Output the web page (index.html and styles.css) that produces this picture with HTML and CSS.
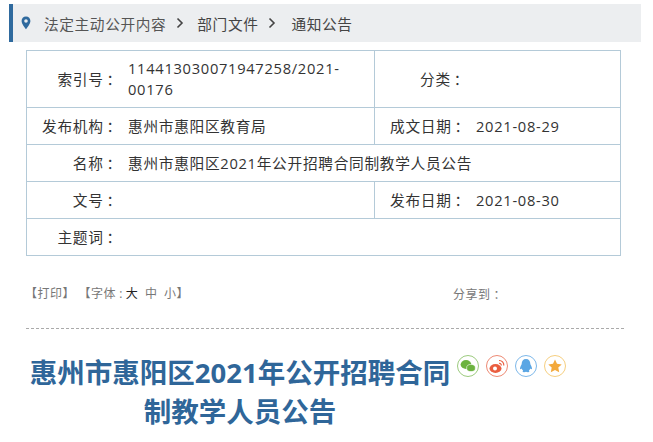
FILE: index.html
```html
<!DOCTYPE html>
<html lang="zh-CN">
<head>
  <meta charset="UTF-8">
  <meta name="viewport" content="width=device-width, initial-scale=1.0">
  <title>通知公告</title>
  <link rel="stylesheet" href="styles.css">
</head>
<body>
  <div class="crumbs">
    <svg class="pin" width="10" height="14" viewBox="0 0 10 14">
      <path fill="#2f6a9e" fill-rule="evenodd" d="M5 0.5C2.3 0.5 0.6 2.5 0.6 4.9 0.6 7.8 3.5 11 5 13.2 6.500 11 9.400 7.800 9.400 4.900 9.400 2.500 7.700 0.500 5 0.500ZM5 3.200A1.800 1.800 0 1 1 5 6.800 1.800 1.800 0 1 1 5 3.200Z"/>
    </svg>
    <a class="crumb first">法定主动公开内容</a>
    <svg class="arrow" width="8" height="12" viewBox="0 0 8 12"><path d="M1.500 1.500L6 6 1.500 10.500" fill="none" stroke="#444" stroke-width="1.600"/></svg>
    <a class="crumb">部门文件</a>
    <svg class="arrow" width="8" height="12" viewBox="0 0 8 12"><path d="M1.500 1.500L6 6 1.500 10.500" fill="none" stroke="#444" stroke-width="1.600"/></svg>
    <a class="crumb">通知公告</a>
  </div>

  <table class="info">
    <tr class="tall">
      <td class="label">索引号<i class="colon">：</i></td>
      <td class="value">114413030071947258/2021-00176</td>
      <td class="label2 center">分类<i class="colon">：</i></td>
      <td class="value2"></td>
    </tr>
    <tr>
      <td class="label">发布机构<i class="colon">：</i></td>
      <td class="value">惠州市惠阳区教育局</td>
      <td class="label2">成文日期<i class="colon">：</i></td>
      <td class="value2">2021-08-29</td>
    </tr>
    <tr>
      <td class="label">名称<i class="colon">：</i></td>
      <td class="value" colspan="3">惠州市惠阳区2021年公开招聘合同制教学人员公告</td>
    </tr>
    <tr>
      <td class="label">文号<i class="colon">：</i></td>
      <td class="value"></td>
      <td class="label2">发布日期<i class="colon">：</i></td>
      <td class="value2">2021-08-30</td>
    </tr>
    <tr>
      <td class="label">主题词<i class="colon">：</i></td>
      <td class="value" colspan="3"></td>
    </tr>
  </table>

  <div class="tools">
    <span class="tool-links">【打印】 【字体<i class="colon tight">:</i><span class="sizes"><b>大</b> 中 小</span>】</span>
    <span class="share">分享到<i class="colon">：</i></span>
  </div>

  <div class="head">
    <h1>惠州市惠阳区2021年公开招聘合同制教学人员公告</h1>
    <div class="icons">
      <svg width="24" height="24" viewBox="0 0 24 24">
        <circle cx="12" cy="12" r="10.500" fill="#fff" stroke="#9ccb7e"/>
        <ellipse cx="10" cy="10.500" rx="5.400" ry="4.400" fill="#6cb33f"/>
        <ellipse cx="15" cy="14" rx="4.400" ry="3.600" fill="#6cb33f" stroke="#fff" stroke-width=".6"/>
      </svg>
      <svg width="24" height="24" viewBox="0 0 24 24">
        <circle cx="12" cy="12" r="10.500" fill="#fff" stroke="#ee8a74"/>
        <ellipse cx="10.500" cy="14.500" rx="6" ry="4.400" fill="#ea5d3f"/>
        <circle cx="10" cy="14.500" r="2" fill="#fff"/>
        <path d="M14 6.500a4.500 4.500 0 0 1 4.800 5M14 9.300a2 2 0 0 1 2.300 2.200" fill="none" stroke="#ea5d3f" stroke-width="1.200"/>
      </svg>
      <svg width="24" height="24" viewBox="0 0 24 24">
        <circle cx="12" cy="12" r="10.500" fill="#fff" stroke="#7db8ea"/>
        <path d="M12 5c-2.900 0-4.300 2.100-4.300 4.800 0 1-1.700 3-1.700 4.700 0 1.100.9.900 1.700 0 .3 1 1 1.700 1.500 2-.8.300-1 1.700.8 1.700 1 0 1.700-.3 2-.5.300.2 1 .5 2 .5 1.800 0 1.600-1.400.8-1.700.5-.3 1.200-1 1.500-2 .8.900 1.700 1.100 1.700 0 0-1.700-1.700-3.700-1.700-4.700C16.300 7.100 14.900 5 12 5Z" fill="#5aa6e4"/>
      </svg>
      <svg width="24" height="24" viewBox="0 0 24 24">
        <circle cx="12" cy="12" r="10.500" fill="#fff" stroke="#f6cf80"/>
        <path d="M12 5.500l2 4.300 4.700.6-3.400 3.200.9 4.600-4.200-2.300-4.200 2.300.9-4.600-3.400-3.200 4.700-.6Z" fill="#f3a93c"/>
      </svg>
    </div>
  </div>
</body>
</html>
```

FILE: styles.css
```css
body {
  margin: 0;
  padding: 4px 12px 0 9px;
  font-family: "Open Sans", "Noto Sans CJK SC", sans-serif;
  background-color: #fff;
  color: #333;
  overflow: hidden;
}

.colon {
  padding-left: 3px;
  font-family: "Noto Sans CJK TC", sans-serif;
  font-style: normal;
}

.colon.tight {
  padding: 0 3px;
  font-family: inherit;
}

.crumbs {
  display: flex;
  align-items: center;
  height: 38px;
  background-color: #eceef0;
  border-left: 4px solid #2f6a9e;
  padding-left: 8px;
  font-size: 14.7px;
  letter-spacing: 0.6px;
  color: #444;
}

.pin {
  margin-right: 13px;
}

.crumb.first {
  color: #555;
}

.arrow {
  margin: 0 13px 0 10px;
}

.arrow + .crumb + .arrow {
  margin-right: 15px;
}

.info {
  width: 595px;
  margin: 8px 0 0 17px;
  border-collapse: collapse;
  table-layout: fixed;
  font-size: 14.7px;
  letter-spacing: 0.7px;
  line-height: 21px;
}

.info td {
  border: 1px solid #b4cad8;
  height: 36px;
  padding: 0;
}

.info td.label {
  width: 95px;
  padding-right: 5px;
  text-align: right;
  border-right: none;
}

.info td.value {
  width: 238px;
  padding: 0 8px 0 1px;
  border-left: none;
}

.info td.label2 {
  padding-left: 15px;
  border-right: none;
}

.info td.label2.center {
  width: 56px;
  padding-left: 45px;
}

.info td.value2 {
  border-left: none;
}

.info .tall td {
  height: 56px;
}

.tools {
  display: flex;
  width: 598px;
  margin: 30px 0 0 17px;
  padding-bottom: 25px;
  border-bottom: 1px dashed #aaa;
  font-size: 12px;
  letter-spacing: 0.5px;
  line-height: 16px;
  color: #777;
  white-space: nowrap;
}

.tool-links {
  flex: none;
  width: 428px;
  margin-left: -1px;
}

.sizes {
  word-spacing: 3px;
}

.tool-links b {
  font-weight: normal;
  color: #222;
}

.head {
  display: flex;
  align-items: flex-start;
  margin: 24px 0 0 19px;
}

h1 {
  width: 424px;
  margin: 0;
  font-size: 27.5px;
  line-height: 39px;
  font-weight: bold;
  text-align: center;
  color: #2f6699;
}

.icons {
  display: flex;
  gap: 5px;
  margin: 1px 0 0 4px;
}
```
